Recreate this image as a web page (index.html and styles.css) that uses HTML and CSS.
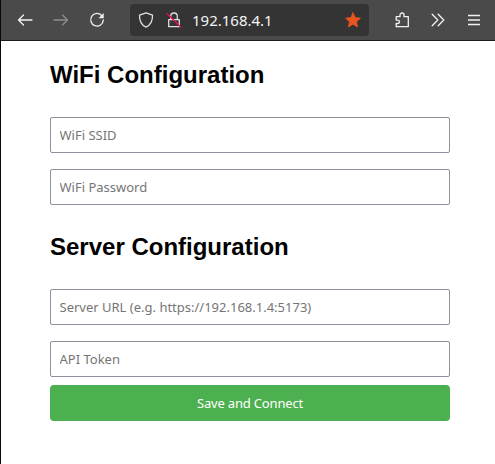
FILE: index.html
```html
<!DOCTYPE html>
<html lang="en">
<head>
<meta charset="utf-8">
<title>WiFi Configuration</title>
<link rel="stylesheet" href="styles.css">
</head>
<body>
<div class="window">
  <header class="toolbar">
    <svg class="icon back" viewBox="0 0 16 16"><path d="M15 8H2M6.500 3 1.500 8l5 5"/></svg>
    <svg class="icon forward" viewBox="0 0 16 16"><path d="M1 8h13M9.500 3l5 5-5 5"/></svg>
    <svg class="icon reload" viewBox="0 0 16 16"><path d="M13.200 4.200A6.300 6.300 0 1 0 14.300 8"/><path class="solid" d="M14.700 1v5.200H9.500z"/></svg>
    <div class="address">
      <svg class="icon shield" viewBox="0 0 16 16"><path d="M8 .8 14.500 3.200C14.700 9 12.500 13 8 15.200 3.500 13 1.300 9 1.500 3.200z"/></svg>
      <svg class="icon lock" viewBox="0 0 16 16"><path d="M4.700 7V4.300a3.300 3.300 0 0 1 6.600 0V7M2.700 7.700h10.600v7H2.700z"/><path class="slash" d="M1.200 1.700 14.700 15"/></svg>
      <span class="url">192.168.4.1</span>
      <svg class="icon star" viewBox="0 0 16 16"><path d="m8 .8 2.200 4.800 5.200.6-3.900 3.500 1.100 5.200L8 12.300l-4.600 2.600 1.100-5.200L.6 6.200l5.200-.6z"/></svg>
    </div>
    <svg class="icon puzzle" viewBox="0 0 16 16"><path d="M2.200 4.700H6V3a2 2 0 0 1 4 0v1.700h4.300v10H2.200v-3.200h1.600a1.700 1.700 0 0 0 0-3.400H2.200z"/></svg>
    <svg class="icon more" viewBox="0 0 16 16"><path d="M2.200 2.200 7.800 8l-5.600 5.800M8.200 2.200 13.800 8l-5.600 5.800"/></svg>
    <svg class="icon menu" viewBox="0 0 16 16"><path d="M2 3.500h12M2 8h12M2 12.500h12"/></svg>
  </header>
  <main class="page">
    <form class="form">
      <h2 class="heading">WiFi Configuration</h2>
      <input class="field ssid" type="text" placeholder="WiFi SSID">
      <input class="field password" type="password" placeholder="WiFi Password">
      <h2 class="heading second">Server Configuration</h2>
      <input class="field server" type="text" placeholder="Server URL (e.g. https://192.168.1.4:5173)">
      <input class="field token" type="text" placeholder="API Token">
      <button class="submit" type="button">Save and Connect</button>
    </form>
  </main>
</div>
</body>
</html>
```
FILE: styles.css
```css
* {
  box-sizing: border-box;
}

body {
  margin: 0;
  background: #fff;
}

.window {
  height: 464px;
  border-left: 1px solid #080808;
  overflow: hidden;
}

.toolbar {
  display: flex;
  align-items: center;
  height: 41px;
  padding: 0 13px 1px 16px;
  background: #4a4a4a;
  border-bottom: 1px solid #1c1b1d;
}

.icon {
  flex: none;
  width: 16px;
  height: 16px;
  fill: none;
  stroke: #f2f2f2;
  stroke-width: 1.3;
  stroke-linecap: round;
  stroke-linejoin: round;
}

.forward {
  margin-left: 20px;
  stroke: #8d8d8d;
}

.reload {
  margin-left: 20px;
}

.solid {
  fill: #f2f2f2;
  stroke: none;
}

.address {
  display: flex;
  align-items: center;
  width: 239px;
  height: 32px;
  margin-left: 25px;
  padding: 0 8px;
  border-radius: 4px;
  background: #343434;
}

.shield,
.lock {
  stroke: #dedede;
}

.lock {
  margin-left: 12px;
}

.slash {
  stroke: #e2144c;
}

.url {
  flex: 1;
  margin-left: 10px;
  color: #f4f4f4;
  font: 15px/20px "Noto Sans", sans-serif;
}

.star {
  fill: #e95420;
  stroke: #e95420;
  stroke-width: .8;
}

.puzzle {
  margin-left: 25px;
}

.more {
  margin-left: 20px;
}

.menu {
  margin-left: auto;
  stroke-linecap: butt;
}

.page {
  padding: 20px 45px 0 49px;
}

.form {
  display: flex;
  flex-direction: column;
  width: 400px;
}

.heading {
  margin: 0 0 28px;
  color: #000;
  font: bold 24px/28px "Liberation Sans", Arial, sans-serif;
}

.second {
  margin-top: 12px;
}

.field {
  width: 100%;
  height: 36px;
  margin: 0 0 16px;
  padding: 0 8.500px;
  border: 1px solid #8f8f9d;
  border-radius: 2px;
  background: #fff;
  font: 13px/18px "Noto Sans", sans-serif;
}

.field::placeholder {
  color: #757575;
}

.token {
  margin-bottom: 8px;
}

.submit {
  height: 36px;
  padding: 0;
  border: 0;
  border-radius: 4px;
  background: #4caf50;
  color: #fff;
  font: 13px/18px "Noto Sans", sans-serif;
  letter-spacing: -.18px;
}
```
